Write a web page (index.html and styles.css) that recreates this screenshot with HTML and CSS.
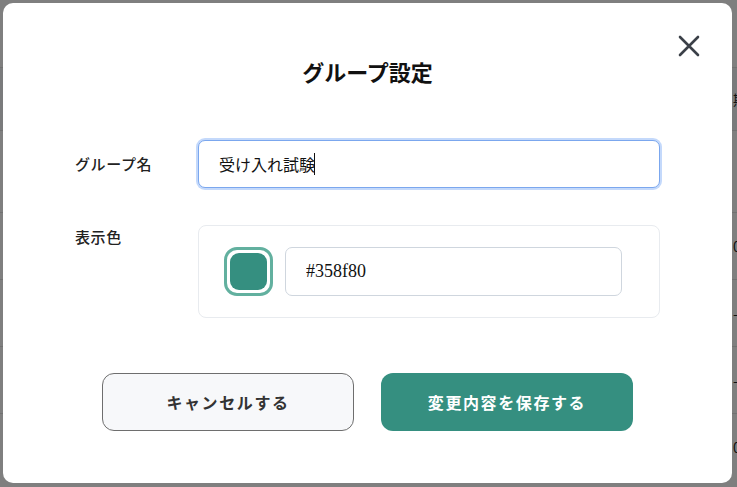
FILE: index.html
```html
<!DOCTYPE html>
<html lang="ja">
  <head>
    <meta charset="utf-8" />
    <meta name="viewport" content="width=device-width, initial-scale=1" />
    <title>グループ設定</title>
    <link rel="stylesheet" href="styles.css">
  </head>

  <body>
    <div class="page">
      <div class="page-row page-head"><span>期間</span></div>
      <div class="page-row page-tall"><span></span></div>
      <div class="page-row"><span>0</span></div>
      <div class="page-row"><span>-</span></div>
      <div class="page-row"><span>-</span></div>
      <div class="page-row"><span>0</span></div>
    </div>

    <div class="overlay">
      <div class="dialog">
        <button class="close" aria-label="閉じる">
          <svg width="22" height="22" viewBox="0 0 22 22">
            <path d="M2 2 L20 20 M20 2 L2 20" stroke="currentColor" stroke-width="2.6" stroke-linecap="round" />
          </svg>
        </button>

        <h2 class="title">グループ設定</h2>

        <div class="field field-name">
          <label class="label" for="group-name">グループ名</label>
          <div class="input-wrap">
            <input id="group-name" class="text-input is-focused" type="text" value="受け入れ試験" />
            <span class="caret"></span>
          </div>
        </div>

        <div class="field field-color">
          <span class="label">表示色</span>
          <div class="color-box">
            <button class="swatch" aria-label="色を選択">
              <span class="swatch-fill"></span>
            </button>
            <input class="text-input hex-input" type="text" value="#358f80" />
          </div>
        </div>

        <div class="actions">
          <button class="btn btn-cancel">キャンセルする</button>
          <button class="btn btn-save">変更内容を保存する</button>
        </div>
      </div>
    </div>
  </body>
</html>
```

FILE: styles.css
```css
html {
  font-family: "Noto Sans CJK JP", "Noto Sans", sans-serif;
  font-size: 16px;
  line-height: 1.5;
}

body {
  margin: 0;
  background-color: white;
  color: #222;
}

/* page behind the modal, only its right edge peeks out */
.page {
  padding-top: 67px;
}

.page-row {
  height: 66px;
  border-top: 1px solid #e3e3e3;
  padding-left: 733px;
  display: flex;
  align-items: center;
  font-size: 14px;
  white-space: nowrap;
  overflow: hidden;
}

.page-head {
  height: 62px;
  background-color: #f4f6f8;
}

.page-tall {
  height: 81px;
}

.overlay {
  position: fixed;
  inset: 0;
  background-color: rgba(0, 0, 0, 0.5);
  padding: 3px 5px 4px 3px;
  display: flex;
}

.dialog {
  position: relative;
  flex: 1;
  background-color: white;
  border-radius: 10px;
  padding: 49px 72px 52px;
}

.close {
  position: absolute;
  top: 27px;
  right: 27px;
  width: 32px;
  height: 32px;
  padding: 0;
  border: none;
  background: none;
  color: #3b4048;
  display: flex;
  align-items: center;
  justify-content: center;
}

.title {
  margin: 0;
  text-align: center;
  font-size: 22px;
  font-weight: 700;
  line-height: 38px;
  color: #111;
}

.field {
  display: flex;
  align-items: center;
}

.field-name {
  margin-top: 50px;
}

.field-color {
  margin-top: 37px;
  align-items: flex-start;
}

.label {
  width: 123px;
  flex-shrink: 0;
  font-size: 15px;
  font-weight: 500;
  letter-spacing: 0.04em;
  color: #222;
}

.field-color .label {
  margin-top: 1px;
}

.input-wrap {
  position: relative;
  flex: 1;
  display: flex;
}

.caret {
  position: absolute;
  left: 116px;
  top: 13px;
  width: 1px;
  height: 22px;
  background-color: #111;
}

.text-input {
  box-sizing: border-box;
  height: 48px;
  padding: 0 20px;
  border: 1px solid #cfd6de;
  border-radius: 7px;
  font-family: "Liberation Serif", "Noto Sans CJK JP", serif;
  font-size: 16px;
  color: #111;
  background-color: white;
  outline: none;
}

.input-wrap .text-input {
  flex: 1;
}

.text-input.is-focused {
  border-color: #7ba7ee;
  box-shadow: 0 0 0 2px #c4d9fb;
}

.color-box {
  flex: 1;
  display: flex;
  align-items: center;
  gap: 12px;
  padding: 21px 25px;
  border: 1px solid #e8ebef;
  border-radius: 8px;
}

.swatch {
  box-sizing: border-box;
  width: 49px;
  height: 49px;
  padding: 3px;
  border: 3px solid #62b09f;
  border-radius: 13px;
  background-color: white;
  display: flex;
}

.swatch-fill {
  flex: 1;
  border-radius: 9px;
  background-color: #358f80;
}

.hex-input {
  width: 337px;
  height: 49px;
  font-size: 18px;
}

.actions {
  margin-top: 55px;
  display: flex;
  justify-content: center;
  gap: 27px;
}

.btn {
  width: 252px;
  height: 58px;
  border-radius: 12px;
  font-family: inherit;
  font-size: 16px;
  font-weight: 700;
  letter-spacing: 0.1em;
}

.btn-cancel {
  border: 1px solid #6e6e6e;
  background-color: #f7f8fa;
  color: #333;
}

.btn-save {
  border: none;
  background-color: #358f80;
  color: white;
}
```
